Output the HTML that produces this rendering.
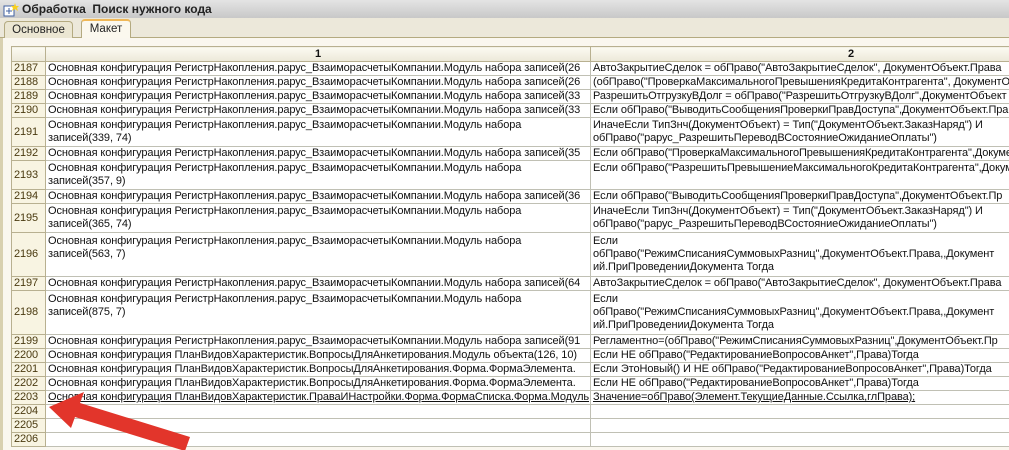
<!DOCTYPE html>
<html><head><meta charset="utf-8"><style>
*{margin:0;padding:0;box-sizing:border-box}
body{width:1009px;height:450px;overflow:hidden;background:#f6f3ea;font-family:"Liberation Sans",sans-serif;position:relative}
.title{position:absolute;left:0;top:0;width:1009px;height:18px;background:linear-gradient(#e4e4e4,#c8c8c8);font-weight:bold;font-size:12px;line-height:18px;padding-left:22px;color:#222}
.tabs{position:absolute;left:0;top:18px;width:1009px;height:20px;background:#ece8da;border-bottom:1px solid #b4aa80}
.tab{position:absolute;top:3px;height:17px;font-size:11.5px;line-height:16px;text-align:center;border:1px solid #b4aa80;border-bottom:none;border-radius:4px 4px 0 0;color:#222}
.t1{left:4px;width:69px;background:#ebe6d2}
.t2{left:81px;width:50px;top:1px;height:20px;background:#fbf8ee;border-top:2px solid #f0b858}
.content{position:absolute;left:0;top:38px;width:1009px;height:412px;background:#faf7ef;border-left:3px solid #d8d0b0}
.wrap{position:absolute;left:11px;top:46px;width:998px;height:404px;overflow:hidden}
table{border-collapse:collapse;table-layout:fixed;font-size:11px;letter-spacing:-0.1px;background:#fff;width:1100px}
td{border:1px solid #c0c0b4;line-height:13px;white-space:nowrap;overflow:hidden;padding:0 2px;vertical-align:middle;color:#111}
td.n{background:#f8f4e2;color:#4a3a10;text-align:left;padding-left:2px;border-color:#b8b090}
tr.h td{background:linear-gradient(#fbfaf2,#ece8d8);height:15px;text-align:center;font-weight:bold;border-color:#b8b090}
tr td{height:14px}
tr.d td{height:29px;white-space:normal}
tr.t td{height:44px;white-space:normal}
tr.u td.c{border-bottom:1px dashed #000;text-decoration:underline}
</style></head><body>
<div class="title"><svg style="position:absolute;left:3px;top:2px" width="16" height="15"><rect x="1" y="4" width="10" height="10" fill="#fff" stroke="#4060a0"/><path d="M3 9h6M6 6v6" stroke="#4060a0"/><path d="M12 1l1 3 3 0-2 2 1 3-3-2-3 2 1-3-2-2 3 0z" fill="#f8d020"/></svg>Обработка&nbsp; Поиск нужного кода</div>
<div class="tabs"><div class="tab t1">Основное</div><div class="tab t2">Макет</div></div>
<div class="content"></div>
<div class="wrap">
<table>
<colgroup><col style="width:34px"><col style="width:545px"><col style="width:521px"></colgroup>
<tr class="h"><td class="n"></td><td>1</td><td>2</td></tr>
<tr><td class="n">2187</td><td>Основная конфигурация РегистрНакопления.рарус_ВзаиморасчетыКомпании.Модуль набора записей(26</td><td>АвтоЗакрытиеСделок = обПраво("АвтоЗакрытиеСделок", ДокументОбъект.Права</td></tr>
<tr><td class="n">2188</td><td>Основная конфигурация РегистрНакопления.рарус_ВзаиморасчетыКомпании.Модуль набора записей(26</td><td>(обПраво("ПроверкаМаксимальногоПревышенияКредитаКонтрагента", ДокументОбъект</td></tr>
<tr><td class="n">2189</td><td>Основная конфигурация РегистрНакопления.рарус_ВзаиморасчетыКомпании.Модуль набора записей(33</td><td>РазрешитьОтгрузкуВДолг = обПраво("РазрешитьОтгрузкуВДолг",ДокументОбъект</td></tr>
<tr><td class="n">2190</td><td>Основная конфигурация РегистрНакопления.рарус_ВзаиморасчетыКомпании.Модуль набора записей(33</td><td>Если обПраво("ВыводитьСообщенияПроверкиПравДоступа",ДокументОбъект.Пра</td></tr>
<tr class="d"><td class="n">2191</td><td>Основная конфигурация РегистрНакопления.рарус_ВзаиморасчетыКомпании.Модуль набора<br>записей(339, 74)</td><td>ИначеЕсли ТипЗнч(ДокументОбъект) = Тип("ДокументОбъект.ЗаказНаряд") И<br>обПраво("рарус_РазрешитьПереводВСостояниеОжиданиеОплаты")</td></tr>
<tr><td class="n">2192</td><td>Основная конфигурация РегистрНакопления.рарус_ВзаиморасчетыКомпании.Модуль набора записей(35</td><td>Если обПраво("ПроверкаМаксимальногоПревышенияКредитаКонтрагента",Документ</td></tr>
<tr class="d"><td class="n">2193</td><td>Основная конфигурация РегистрНакопления.рарус_ВзаиморасчетыКомпании.Модуль набора<br>записей(357, 9)</td><td style="white-space:nowrap">Если обПраво("РазрешитьПревышениеМаксимальногоКредитаКонтрагента",Докуме<br>&nbsp;</td></tr>
<tr><td class="n">2194</td><td>Основная конфигурация РегистрНакопления.рарус_ВзаиморасчетыКомпании.Модуль набора записей(36</td><td>Если обПраво("ВыводитьСообщенияПроверкиПравДоступа",ДокументОбъект.Пр</td></tr>
<tr class="d"><td class="n">2195</td><td>Основная конфигурация РегистрНакопления.рарус_ВзаиморасчетыКомпании.Модуль набора<br>записей(365, 74)</td><td>ИначеЕсли ТипЗнч(ДокументОбъект) = Тип("ДокументОбъект.ЗаказНаряд") И<br>обПраво("рарус_РазрешитьПереводВСостояниеОжиданиеОплаты")</td></tr>
<tr class="t"><td class="n">2196</td><td>Основная конфигурация РегистрНакопления.рарус_ВзаиморасчетыКомпании.Модуль набора<br>записей(563, 7)<br>&nbsp;</td><td style="white-space:nowrap">Если<br>обПраво("РежимСписанияСуммовыхРазниц",ДокументОбъект.Права,,Документ<br>ий.ПриПроведенииДокумента Тогда</td></tr>
<tr><td class="n">2197</td><td>Основная конфигурация РегистрНакопления.рарус_ВзаиморасчетыКомпании.Модуль набора записей(64</td><td>АвтоЗакрытиеСделок = обПраво("АвтоЗакрытиеСделок", ДокументОбъект.Права</td></tr>
<tr class="t"><td class="n">2198</td><td>Основная конфигурация РегистрНакопления.рарус_ВзаиморасчетыКомпании.Модуль набора<br>записей(875, 7)<br>&nbsp;</td><td style="white-space:nowrap">Если<br>обПраво("РежимСписанияСуммовыхРазниц",ДокументОбъект.Права,,Документ<br>ий.ПриПроведенииДокумента Тогда</td></tr>
<tr><td class="n">2199</td><td>Основная конфигурация РегистрНакопления.рарус_ВзаиморасчетыКомпании.Модуль набора записей(91</td><td>Регламентно=(обПраво("РежимСписанияСуммовыхРазниц",ДокументОбъект.Пр</td></tr>
<tr><td class="n">2200</td><td>Основная конфигурация ПланВидовХарактеристик.ВопросыДляАнкетирования.Модуль объекта(126, 10)</td><td>Если НЕ обПраво("РедактированиеВопросовАнкет",Права)Тогда</td></tr>
<tr><td class="n">2201</td><td>Основная конфигурация ПланВидовХарактеристик.ВопросыДляАнкетирования.Форма.ФормаЭлемента.</td><td>Если ЭтоНовый() И НЕ обПраво("РедактированиеВопросовАнкет",Права)Тогда</td></tr>
<tr><td class="n">2202</td><td>Основная конфигурация ПланВидовХарактеристик.ВопросыДляАнкетирования.Форма.ФормаЭлемента.</td><td>Если НЕ обПраво("РедактированиеВопросовАнкет",Права)Тогда</td></tr>
<tr class="u"><td class="n">2203</td><td class="c">Основная конфигурация ПланВидовХарактеристик.ПраваИНастройки.Форма.ФормаСписка.Форма.Модуль</td><td class="c">Значение=обПраво(Элемент.ТекущиеДанные.Ссылка,глПрава);</td></tr>
<tr><td class="n">2204</td><td></td><td></td></tr>
<tr><td class="n">2205</td><td></td><td></td></tr>
<tr><td class="n">2206</td><td></td><td></td></tr>
</table>
</div>
<svg style="position:absolute;left:0;top:0" width="1009" height="450">
<path d="M49 407 L84 392 L80 403 L190 437 L185 451 L75 417 L71 428 Z" fill="#e2352b"/>
</svg>
</body></html>
